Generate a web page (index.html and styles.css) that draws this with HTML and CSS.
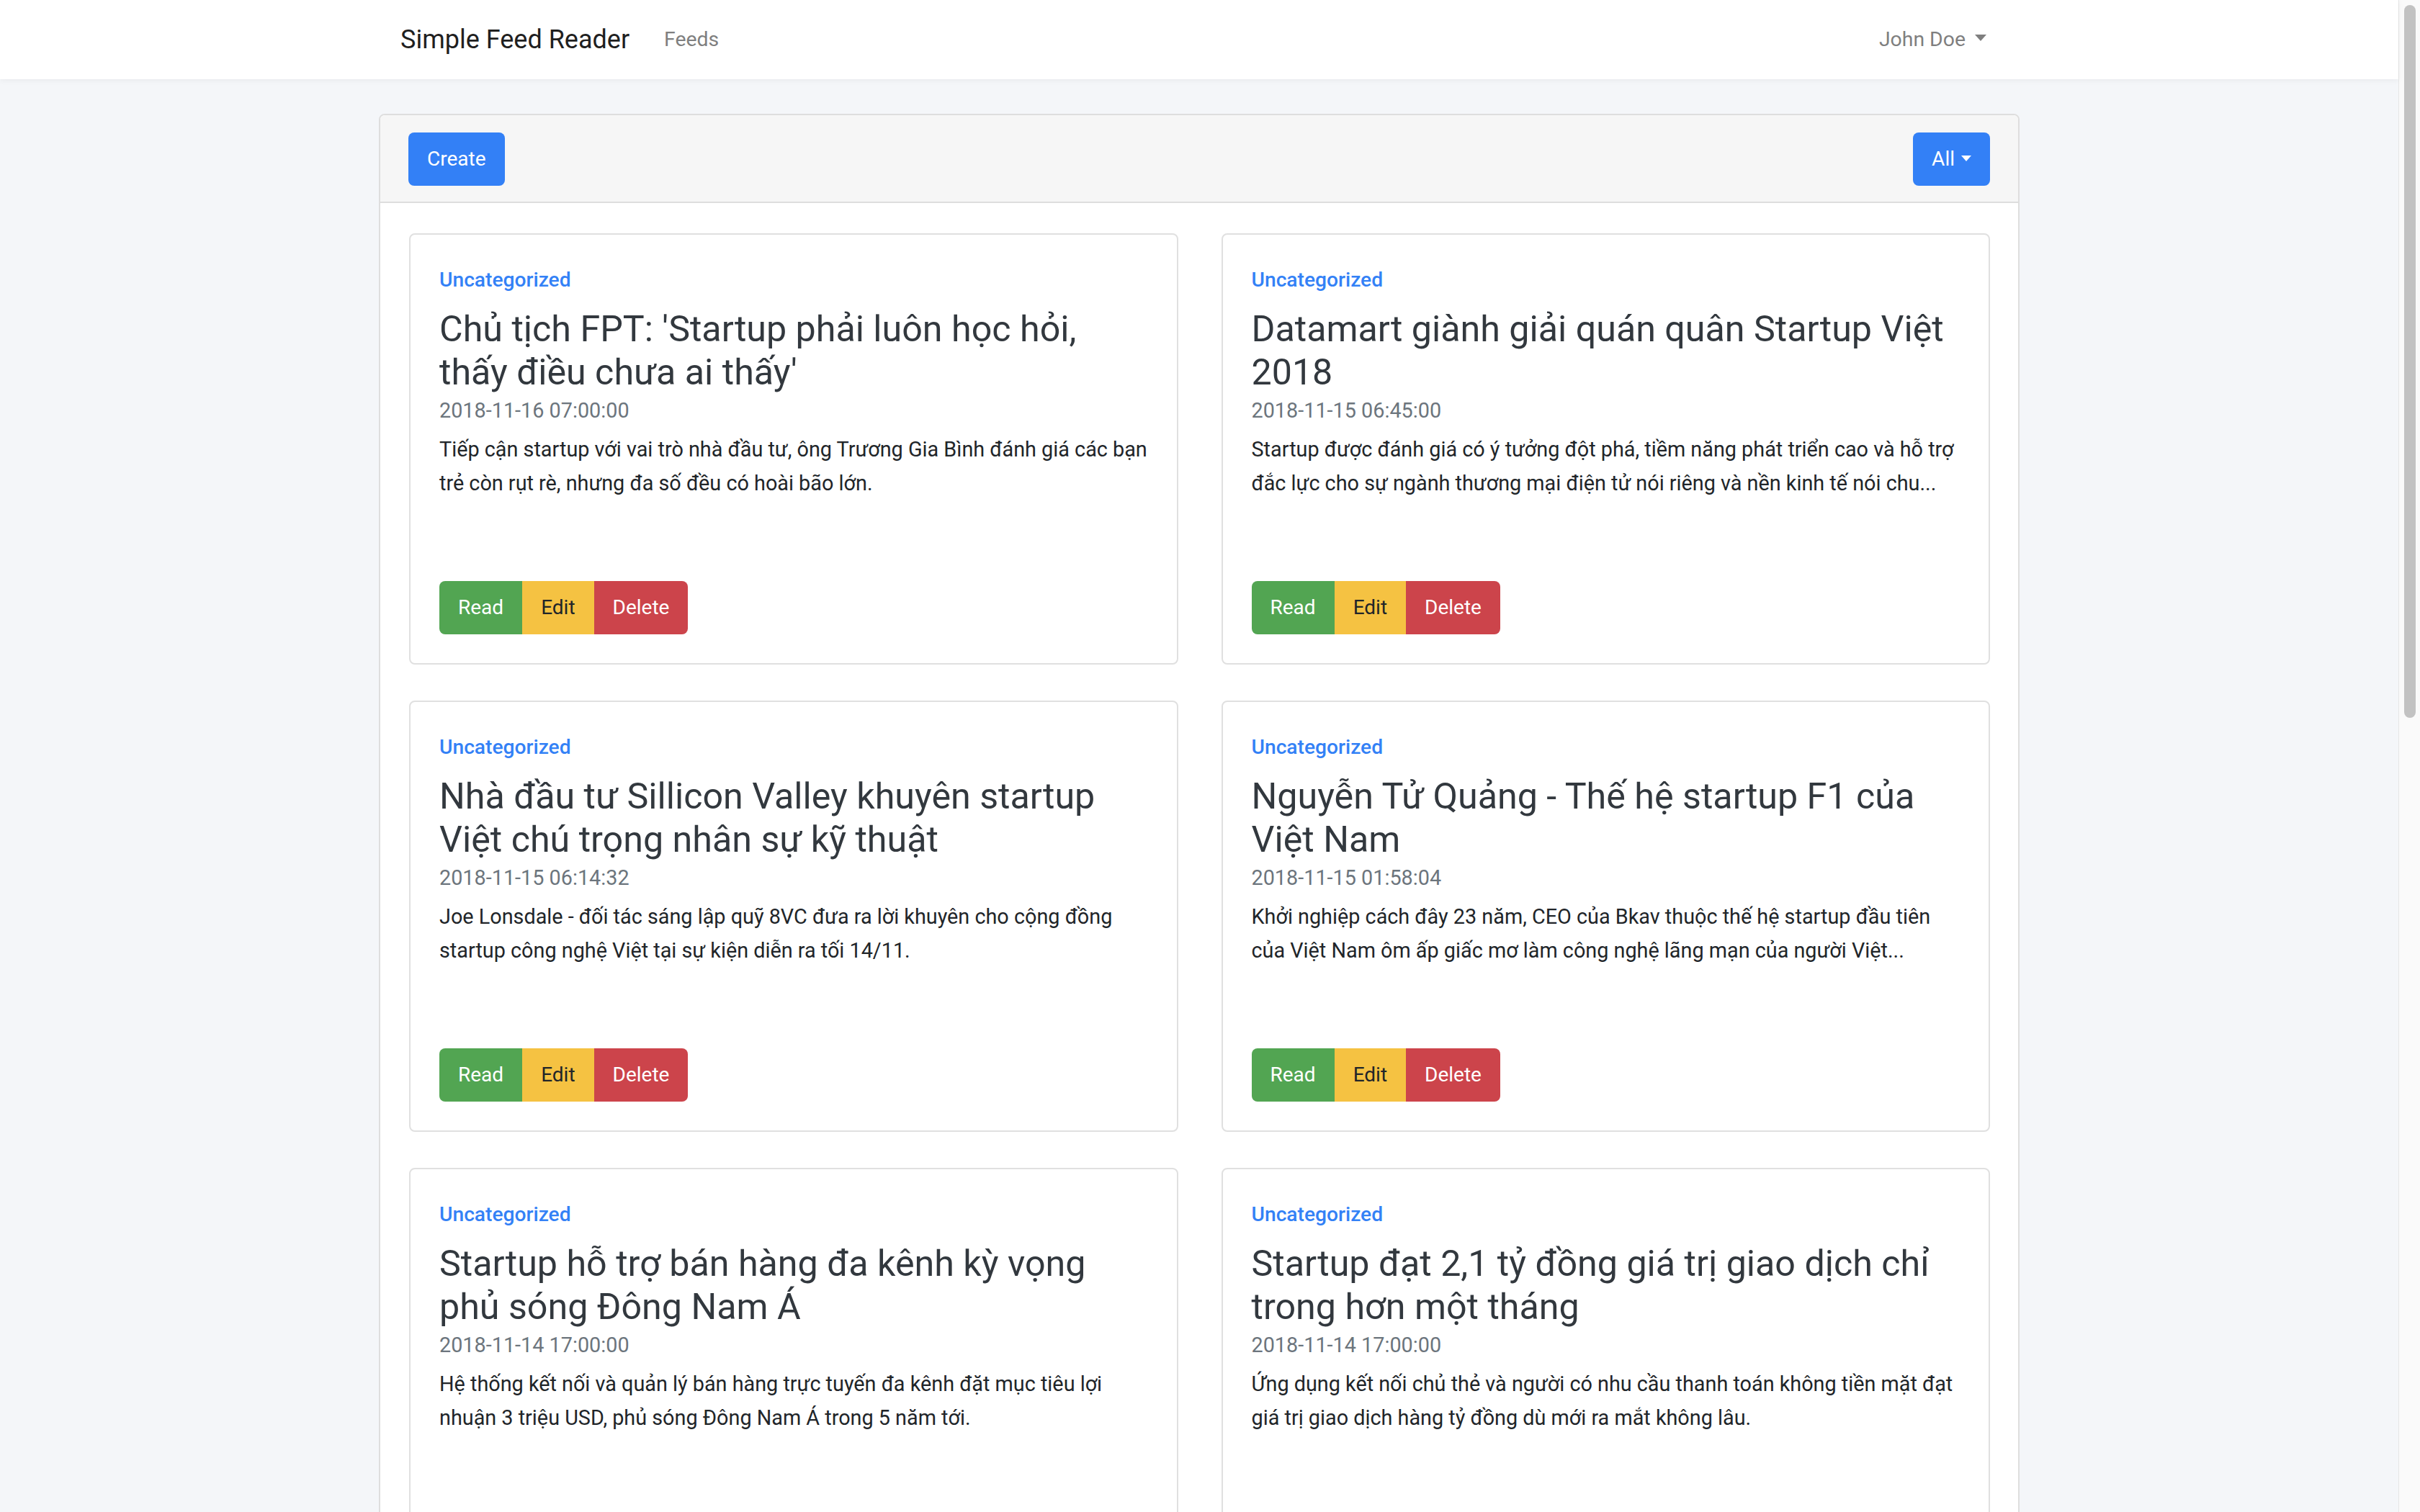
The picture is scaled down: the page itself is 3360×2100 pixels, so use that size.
FILE: index.html
```html
<!DOCTYPE html>
<html lang="vi">
<head>
<meta charset="utf-8">
<title>Simple Feed Reader</title>
<link rel="stylesheet" href="styles.css">
</head>
<body>
<div class="page">
  <nav class="navbar">
    <div class="nav-inner">
      <a class="brand" href="#">Simple Feed Reader</a>
      <a class="nav-link" href="#">Feeds</a>
      <a class="nav-link user" href="#">John Doe<span class="caret caret-gray"></span></a>
    </div>
  </nav>
  <main class="container">
    <section class="panel">
      <header class="panel-header">
        <button class="btn btn-primary">Create</button>
        <button class="btn btn-primary">All<span class="caret caret-white"></span></button>
      </header>
      <div class="panel-body">
        <article class="feed">
          <a class="cat" href="#">Uncategorized</a>
          <h3 class="title">Chủ tịch FPT: 'Startup phải luôn học hỏi, thấy điều chưa ai thấy'</h3>
          <div class="date">2018-11-16 07:00:00</div>
          <p class="desc">Tiếp cận startup với vai trò nhà đầu tư, ông Trương Gia Bình đánh giá các bạn trẻ còn rụt rè, nhưng đa số đều có hoài bão lớn.</p>
          <div class="btn-group"><button class="btn btn-success">Read</button><button class="btn btn-warning">Edit</button><button class="btn btn-danger">Delete</button></div>
        </article>
        <article class="feed">
          <a class="cat" href="#">Uncategorized</a>
          <h3 class="title">Datamart giành giải quán quân Startup Việt 2018</h3>
          <div class="date">2018-11-15 06:45:00</div>
          <p class="desc">Startup được đánh giá có ý tưởng đột phá, tiềm năng phát triển cao và hỗ trợ đắc lực cho sự ngành thương mại điện tử nói riêng và nền kinh tế nói chu...</p>
          <div class="btn-group"><button class="btn btn-success">Read</button><button class="btn btn-warning">Edit</button><button class="btn btn-danger">Delete</button></div>
        </article>
        <article class="feed">
          <a class="cat" href="#">Uncategorized</a>
          <h3 class="title">Nhà đầu tư Sillicon Valley khuyên startup Việt chú trọng nhân sự kỹ thuật</h3>
          <div class="date">2018-11-15 06:14:32</div>
          <p class="desc">Joe Lonsdale - đối tác sáng lập quỹ 8VC đưa ra lời khuyên cho cộng đồng startup công nghệ Việt tại sự kiện diễn ra tối 14/11.</p>
          <div class="btn-group"><button class="btn btn-success">Read</button><button class="btn btn-warning">Edit</button><button class="btn btn-danger">Delete</button></div>
        </article>
        <article class="feed">
          <a class="cat" href="#">Uncategorized</a>
          <h3 class="title">Nguyễn Tử Quảng - Thế hệ startup F1 của Việt Nam</h3>
          <div class="date">2018-11-15 01:58:04</div>
          <p class="desc">Khởi nghiệp cách đây 23 năm, CEO của Bkav thuộc thế hệ startup đầu tiên của Việt Nam ôm ấp giấc mơ làm công nghệ lãng mạn của người Việt...</p>
          <div class="btn-group"><button class="btn btn-success">Read</button><button class="btn btn-warning">Edit</button><button class="btn btn-danger">Delete</button></div>
        </article>
        <article class="feed">
          <a class="cat" href="#">Uncategorized</a>
          <h3 class="title">Startup hỗ trợ bán hàng đa kênh kỳ vọng phủ sóng Đông Nam Á</h3>
          <div class="date">2018-11-14 17:00:00</div>
          <p class="desc">Hệ thống kết nối và quản lý bán hàng trực tuyến đa kênh đặt mục tiêu lợi nhuận 3 triệu USD, phủ sóng Đông Nam Á trong 5 năm tới.</p>
          <div class="btn-group"><button class="btn btn-success">Read</button><button class="btn btn-warning">Edit</button><button class="btn btn-danger">Delete</button></div>
        </article>
        <article class="feed">
          <a class="cat" href="#">Uncategorized</a>
          <h3 class="title">Startup đạt 2,1 tỷ đồng giá trị giao dịch chỉ trong hơn một tháng</h3>
          <div class="date">2018-11-14 17:00:00</div>
          <p class="desc">Ứng dụng kết nối chủ thẻ và người có nhu cầu thanh toán không tiền mặt đạt giá trị giao dịch hàng tỷ đồng dù mới ra mắt không lâu.</p>
          <div class="btn-group"><button class="btn btn-success">Read</button><button class="btn btn-warning">Edit</button><button class="btn btn-danger">Delete</button></div>
        </article>
      </div>
    </section>
  </main>
</div>
<div class="scrollbar"><div class="thumb"></div></div>
</body>
</html>
```
FILE: styles.css
```css
* { box-sizing: border-box; }
html, body { margin: 0; padding: 0; }
body {
  display: flex;
  height: 2100px;
  overflow: hidden;
  background: #f4f6f9;
  font-family: Roboto, "Noto Sans", "Liberation Sans", sans-serif;
  color: #212529;
}
.page { flex: 1; min-width: 0; }
.scrollbar {
  width: 30px;
  flex: none;
  background: #fafafa;
  border-left: 1px solid #e6e6e6;
  padding: 7px 0 0 7px;
}
.thumb {
  width: 16px;
  height: 990px;
  background: #c2c2c2;
  border-radius: 8px;
}
a { text-decoration: none; }

.navbar {
  background: #fff;
  height: 110px;
  box-shadow: 0 2px 8px rgba(0, 0, 0, 0.05);
  position: relative;
}
.nav-inner {
  width: 2278px;
  margin: 0 auto;
  padding: 0 30px;
  height: 100%;
  display: flex;
  align-items: center;
}
.brand {
  font-size: 36px;
  color: #1f1f1f;
  margin-right: 32px;
  line-height: 54px;
}
.nav-link {
  font-size: 28.4px;
  color: #7f7f7f;
  padding: 0 16px;
  line-height: 42px;
  display: flex;
  align-items: center;
}
.user { margin-left: auto; }
.caret {
  display: inline-block;
  width: 0; height: 0;
  border-left: 8px solid transparent;
  border-right: 8px solid transparent;
}
.caret-gray { border-top: 9px solid #7f7f7f; margin-left: 13px; margin-bottom: 6px; }
.caret-white { border-top: 8px solid #fff; margin-left: 9px; margin-bottom: 3px; border-left-width: 7.5px; border-right-width: 7.5px; }

.container {
  width: 2278px;
  margin: 48px auto 0;
}
.panel {
  background: #fff;
  border: 2px solid #dedede;
  border-radius: 8px;
}
.panel-header {
  background: #f6f6f6;
  border-bottom: 2px solid #dedede;
  border-radius: 6px 6px 0 0;
  padding: 24px 39px 22px 39px;
  display: flex;
  justify-content: space-between;
  align-items: center;
}
.btn {
  font-family: inherit;
  font-size: 28px;
  line-height: 42px;
  height: 74px;
  padding: 0 25px;
  border: 1px solid transparent;
  border-radius: 8px;
  display: inline-flex;
  align-items: center;
  cursor: pointer;
}
.btn-primary { background: #3380f6; color: #fff; }
.btn-success { background: #52a552; color: #fff; }
.btn-warning { background: #f5c242; color: #212529; }
.btn-danger { background: #cc444b; color: #fff; }

.panel-body {
  padding: 42px 39px 40px 40px;
  display: grid;
  grid-template-columns: 1fr 1fr;
  column-gap: 60px;
  row-gap: 50px;
}
.feed {
  border: 2px solid #e0e0e0;
  border-radius: 8px;
  padding: 40px 40px 40px 40px;
  height: 599px;
  display: flex;
  flex-direction: column;
  align-items: flex-start;
}
.cat {
  font-size: 28.2px;
  font-weight: 500;
  color: #3381f6;
  line-height: 45px;
}
.title {
  margin: 16px 0 0;
  font-size: 50.2px;
  font-weight: 400;
  line-height: 60px;
  color: #32383e;
}
.date {
  margin-top: 2px;
  font-size: 28.8px;
  line-height: 42px;
  color: #6c757d;
}
.desc {
  margin: 10px 0 0;
  font-size: 28.8px;
  line-height: 47px;
  color: #212529;
}
.btn-group {
  margin-top: auto;
  display: flex;
}
.btn-group .btn { border-radius: 0; }
.btn-group .btn:first-child { border-radius: 8px 0 0 8px; }
.btn-group .btn:last-child { border-radius: 0 8px 8px 0; }
```
